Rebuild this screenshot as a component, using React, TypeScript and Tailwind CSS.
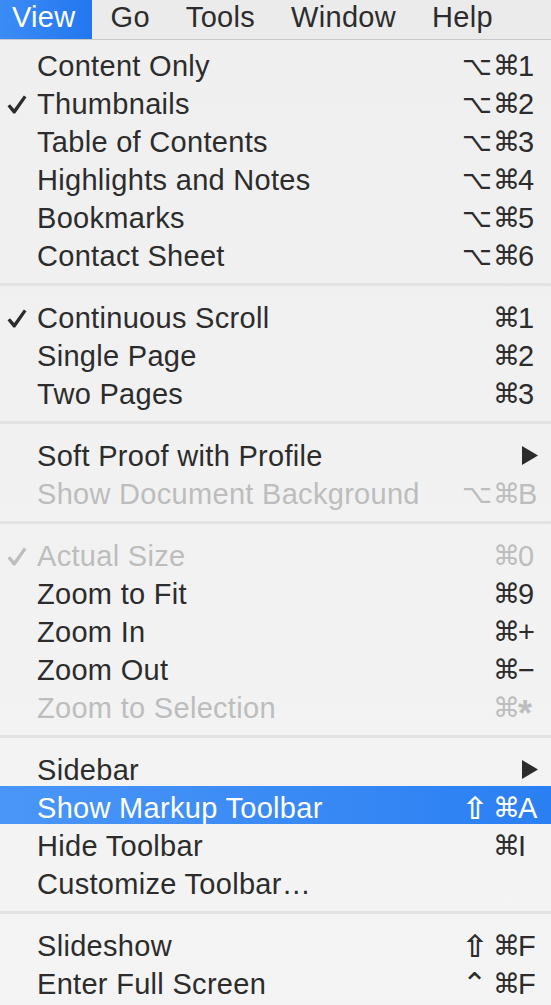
import clsx from "clsx";

type Item = {
  label: string;
  check?: boolean;
  disabled?: boolean;
  mods?: string[];
  keyChar?: string;
  submenu?: boolean;
  active?: boolean;
};

const OPT = "\u2325";
const CMD = "\u2318";
const SHIFT = "\u21E7";
const CTRL = "\u2303";

const sections: Item[][] = [
  [
    { label: "Content Only", mods: [OPT, CMD], keyChar: "1" },
    { label: "Thumbnails", check: true, mods: [OPT, CMD], keyChar: "2" },
    { label: "Table of Contents", mods: [OPT, CMD], keyChar: "3" },
    { label: "Highlights and Notes", mods: [OPT, CMD], keyChar: "4" },
    { label: "Bookmarks", mods: [OPT, CMD], keyChar: "5" },
    { label: "Contact Sheet", mods: [OPT, CMD], keyChar: "6" },
  ],
  [
    { label: "Continuous Scroll", check: true, mods: [CMD], keyChar: "1" },
    { label: "Single Page", mods: [CMD], keyChar: "2" },
    { label: "Two Pages", mods: [CMD], keyChar: "3" },
  ],
  [
    { label: "Soft Proof with Profile", submenu: true },
    { label: "Show Document Background", disabled: true, mods: [OPT, CMD], keyChar: "B" },
  ],
  [
    { label: "Actual Size", check: true, disabled: true, mods: [CMD], keyChar: "0" },
    { label: "Zoom to Fit", mods: [CMD], keyChar: "9" },
    { label: "Zoom In", mods: [CMD], keyChar: "+" },
    { label: "Zoom Out", mods: [CMD], keyChar: "\u2212" },
    { label: "Zoom to Selection", disabled: true, mods: [CMD], keyChar: "*" },
  ],
  [
    { label: "Sidebar", submenu: true },
    { label: "Show Markup Toolbar", active: true, mods: [SHIFT, CMD], keyChar: "A" },
    { label: "Hide Toolbar", mods: [CMD], keyChar: "I" },
    { label: "Customize Toolbar\u2026" },
  ],
  [
    { label: "Slideshow", mods: [SHIFT, CMD], keyChar: "F" },
    { label: "Enter Full Screen", mods: [CTRL, CMD], keyChar: "F" },
  ],
];

function Check() {
  return (
    <svg width="20" height="19" viewBox="0 0 18 18" fill="currentColor">
      <path d="M0 10.6 L2.4 8.7 L6.3 13.3 L15.5 0.4 L18 2.2 L7.3 17.6 L5.5 17.6 Z" />
    </svg>
  );
}

function Arrow() {
  return (
    <svg width="16" height="19" viewBox="0 0 16 19" fill="currentColor">
      <path d="M0 0 L16 9.5 L0 19 Z" />
    </svg>
  );
}

function Row({ item }: { item: Item }) {
  const color = item.active
    ? "text-white"
    : item.disabled
      ? "text-[#bdbdbd]"
      : "text-[#2c2c2c]";
  return (
    <div
      className={clsx(
        "flex h-[38px] items-start pt-[6px] leading-[32px]",
        color,
        item.active && "bg-linear-to-r from-[#4a96f8] to-[#2a7ff2]"
      )}
    >
      <div className="w-[37px] shrink-0 pl-[7px] pt-[7px]">
        {item.check && <Check />}
      </div>
      <div className="flex-1 whitespace-nowrap tracking-[0.3px]">{item.label}</div>
      <div className="flex justify-end gap-[7px] font-['DejaVu_Sans',sans-serif] text-[27px]">
        {item.mods?.map((m, i) => (
          <span
            key={i}
            className={clsx(
              "w-[24px] text-center",
              m === SHIFT && "text-[31px] font-bold",
              m === OPT && "text-[26px]",
              m === CTRL && "text-[30px]"
            )}
          >
            {m}
          </span>
        ))}
      </div>
      <div className="w-[34px] shrink-0 pl-px">
        {item.keyChar === "*" ? (
          <span className="inline-block translate-y-[6px] text-[36px] font-bold">*</span>
        ) : (
          item.keyChar
        )}
        {item.submenu && (
          <div className="ml-[4px] mt-[6px]">
            <Arrow />
          </div>
        )}
      </div>
    </div>
  );
}

export default function App() {
  return (
    <div className="h-[1005px] w-[551px] overflow-hidden bg-linear-to-b from-[#efefef] to-[#f4f4f4] font-['Liberation_Sans',Arial,sans-serif] text-[29px]">
      <div className="flex h-[40px] border-b border-[#c9c9c9] bg-[#ebebeb] pt-[1px] leading-[33px] tracking-[0.3px] text-[#2c2c2c]">
        <div className="-mt-px h-[39px] bg-linear-to-r from-[#3c8cf6] to-[#2276ef] pl-[12px] pr-[16px] pt-px text-white">
          View
        </div>
        <div className="pl-[19px] pr-[18px]">Go</div>
        <div className="px-[18px]">Tools</div>
        <div className="px-[18px]">Window</div>
        <div className="px-[18px]">Help</div>
      </div>
      <div className="pt-[4px]">
        {sections.map((sec, si) => (
          <div key={si}>
            {si > 0 && (
              <div className="flex h-[24px] items-center">
                <div className="h-[3px] w-full bg-[#e3e3e3]" />
              </div>
            )}
            {sec.map((item) => (
              <Row key={item.label} item={item} />
            ))}
          </div>
        ))}
      </div>
    </div>
  );
}
